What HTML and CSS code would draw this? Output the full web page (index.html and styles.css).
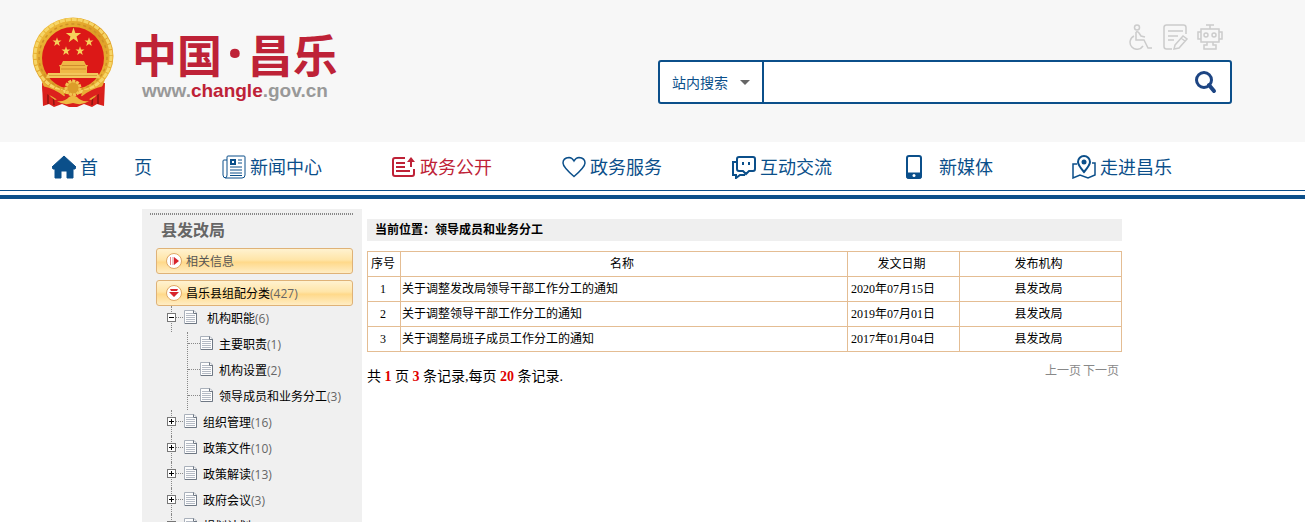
FILE: index.html
```html
<!DOCTYPE html>
<html lang="zh-CN">
<head>
  <meta charset="UTF-8">
  <title>中国·昌乐</title>
  <link rel="stylesheet" href="styles.css">
</head>
<body>
  <!-- shared symbols -->
  <svg class="defs" width="0" height="0">
    <symbol id="doc" viewBox="0 0 13 14">
      <path d="M.5.5h9.500l2.500 2.500v10.500H.5z" fill="#fdfdfd" stroke="#a9b0ba"/>
      <path d="M2 3.500h7M2 5.500h9M2 7.500h9M2 9.500h9M2 11.500h9" stroke="#b4bac4"/>
      <path d="M9.500.5v3h3M12.500 3v10.500H1" fill="none" stroke="#6f7884"/>
    </symbol>
    <symbol id="star" viewBox="-10 -10 20 20">
      <path d="M0-9.500 2.200-3H9L3.600 1.100 5.600 8 0 3.900-5.600 8-3.600 1.100-9-3h6.800z" fill="#f6d05a"/>
    </symbol>
  </svg>

  <header class="header">
    <div class="header-inner">
      <a class="logo" href="#">
        <svg class="emblem" viewBox="0 0 84 92">
          <defs>
            <linearGradient id="gold" x1="0" y1="0" x2="1" y2="1">
              <stop offset="0" stop-color="#f3c53f"/>
              <stop offset=".5" stop-color="#dd9b25"/>
              <stop offset="1" stop-color="#f0bd3c"/>
            </linearGradient>
          </defs>
          <path d="M10 66 11 89l6-2 5 3 8-3 7 3h8l7-3 8 3 5-3 7 2 1-23z" fill="#d9201c"/>
          <path d="M16 74v13M21 76l1 12M61 76l-1 12M66 74v13" stroke="#8f1512" stroke-width="1.500"/>
          <ellipse cx="41" cy="39" rx="40.500" ry="38.500" fill="url(#gold)"/>
          <ellipse cx="41" cy="39" rx="38" ry="36.500" fill="none" stroke="#f6d566" stroke-width="3" stroke-dasharray="5 1"/>
          <ellipse cx="41" cy="40" rx="34" ry="33" fill="none" stroke="#cf9026" stroke-width="1.500" stroke-dasharray="3 3"/>
          <circle cx="41" cy="41" r="31" fill="#dc1817"/>
          <use href="#star" x="33" y="10" width="17" height="17"/>
          <use href="#star" x="20" y="20" width="10" height="10"/>
          <use href="#star" x="52" y="20" width="10" height="10"/>
          <use href="#star" x="29" y="29" width="10" height="10"/>
          <use href="#star" x="43" y="29" width="10" height="10"/>
          <path d="M31 44h21l2 4h2l-1 2v6h-27v-6l-1-2h2z" fill="#efb847"/>
          <path d="M30 48.500h23M29 52h25" stroke="#cf8e2c"/>
          <path d="M16 56h50l2 5H14z" fill="#f3c75b"/>
          <path d="M17 58.500h48" stroke="#d99f3a"/>
          <path d="M8 60q8 13 23 13l2 6-10 4Q14 78 8 60zM74 60q-8 13-23 13l-2 6 10 4Q68 78 74 60z" fill="#e9ae35"/>
          <path d="M10 69q14 3 23 11l8-4 8 4q9-8 23-11l-1 7q-10 2-17 9l-13-5-13 5q-8-7-17-9z" fill="#dc211d"/>
          <circle cx="41" cy="71" r="7" fill="#dc9c2a"/>
          <circle cx="41" cy="71" r="7" fill="none" stroke="#f2c451" stroke-width="3" stroke-dasharray="3 1"/>
          <path d="M25 84q8 1 12-4l4-2 4 2q4 5 12 4-7 5-16 2-9 3-16-2z" fill="#efb842"/>
        </svg>
        <span class="logo-text">
          <span class="logo-name">中国<span class="dot">·</span>昌乐</span>
          <span class="logo-url">www.<b>changle</b>.gov.cn</span>
        </span>
      </a>

      <div class="header-right">
        <div class="tools">
          <a href="#" aria-label="无障碍">
            <svg width="26" height="26" viewBox="0 0 26 26">
              <circle cx="10" cy="3.500" r="2.500"/>
              <path d="M9 8q2-1 3 1l2 3 4 1M9 8v8h8l4 8h4M7 12a7 7 0 1 0 9 10"/>
            </svg>
          </a>
          <a href="#" aria-label="留言">
            <svg width="26" height="26" viewBox="0 0 26 26">
              <path d="M24 10V3.500Q24 1 21.500 1h-17Q2 1 2 3.500v19Q2 25 4.500 25H10M6 7h15M6 12h10M6 16h6M13 21l8-9 4 3-8 9-5 1zM19 14l4 3"/>
            </svg>
          </a>
          <a href="#" aria-label="智能问答">
            <svg width="26" height="26" viewBox="0 0 26 26">
              <path d="M9 1h8M13 1v4M4 5h18v13H4zM4 8H1v7h3M22 8h3v7h-3M10 18v3H7v4h12v-4h-3v-3"/>
              <circle cx="9" cy="11" r="2"/>
              <circle cx="17" cy="11" r="2"/>
            </svg>
          </a>
        </div>
        <form class="search" action="#">
          <label class="search-type">
            <select aria-label="搜索范围"><option>站内搜索</option></select>
          </label>
          <input type="text" aria-label="搜索">
          <button type="button" aria-label="搜索">
            <svg width="24" height="24" viewBox="0 0 24 24">
              <circle cx="10" cy="10" r="7.500" fill="none" stroke="#1d4583" stroke-width="3"/>
              <path d="m15 15 5 6" stroke="#1d4583" stroke-width="4" stroke-linecap="round"/>
            </svg>
          </button>
        </form>
      </div>
    </div>
  </header>

  <nav class="nav">
    <div class="nav-inner">
      <a href="#">
        <svg viewBox="0 0 24 24"><path d="M12 1 0 12l1 2h2v9h6v-7h6v7h6v-9h2l1-2z" fill="currentColor"/></svg>
        <span>首　　页</span>
      </a>
      <a href="#">
        <svg viewBox="0 0 24 24">
          <path d="M5 5H2Q1 5 1 6v14q0 3 3 3h16q3 0 3-3V2q0-1-1-1H6Q5 1 5 2v18q0 3-2 3M16 5h4M16 8h4M8 12h12M8 15h12M8 18h12M8 20.500h12"/>
          <path d="M9 5h4v4H9z" stroke-width="2"/>
        </svg>
        <span>新闻中心</span>
      </a>
      <a href="#" class="active">
        <svg viewBox="0 0 24 24">
          <path d="M13 3H3Q1 3 1 5v14q0 2 2 2h17q2 0 2-2v-5M4 8h9M4 12h9M4 16h14" stroke-width="2"/>
          <path d="M19 12V6" stroke-width="2"/><path d="m19 2 4 5h-8z" fill="currentColor" stroke="none"/>
        </svg>
        <span>政务公开</span>
      </a>
      <a href="#">
        <svg viewBox="0 0 24 24"><path d="M12 21.500Q1 12 1 8q0-5 6-5.500Q10 2.500 12 6q2-3.500 5-3.500 6 .5 6 5.500 0 4-11 13.500z" stroke-width="1.500"/></svg>
        <span>政务服务</span>
      </a>
      <a href="#">
        <svg viewBox="0 0 24 24">
          <path d="M7 2h14q2 0 2 2v10q0 2-2 2h-4l-3 3-3-3H7q-2 0-2-2V4q0-2 2-2zM4 7H1v13h3v3l4-3h5" stroke-width="2"/>
          <path d="M10 7h2v3h-2zM16 7h2v3h-2z" fill="currentColor" stroke="none"/>
        </svg>
        <span>互动交流</span>
      </a>
      <a href="#" class="short">
        <svg viewBox="0 0 24 24">
          <rect x="5" y="1" width="14" height="22" rx="2" stroke-width="2"/>
          <path d="M5 18h14v5H5z" fill="currentColor"/><circle cx="12" cy="20.500" r="1.500" fill="#fff" stroke="none"/>
        </svg>
        <span>新媒体</span>
      </a>
      <a href="#">
        <svg viewBox="0 0 24 24">
          <path d="M5 9H1v14l7-3 8 3 7-3V8h-3" stroke-width="1.500"/>
          <path d="M12 17Q6 10 6 7a6 6 0 0 1 12 0q0 3-6 10z" stroke-width="2"/><circle cx="12" cy="7" r="2.500" fill="currentColor" stroke="none"/>
        </svg>
        <span>走进昌乐</span>
      </a>
    </div>
  </nav>

  <div class="content">
    <aside class="sidebar">
      <h2>县发改局</h2>
      <a class="bar" href="#">
        <svg width="16" height="16" viewBox="0 0 16 16">
          <circle cx="8" cy="8" r="7.500" fill="#fff" stroke="#dfa866"/>
          <path d="M4.500 4v8M7 4v8" stroke="#e8868a"/>
          <path d="M8 4l5 4-5 4z" fill="#d8242c"/>
        </svg>相关信息
      </a>
      <a class="bar open" href="#">
        <svg width="16" height="16" viewBox="0 0 16 16">
          <circle cx="8" cy="8" r="7.500" fill="#fff" stroke="#dfa866"/>
          <path d="M4 4h8l-1 2H5zM3 7h10l-5 5z" fill="#d8242c"/>
        </svg>昌乐县组配分类<span>(427)</span>
      </a>

      <ul class="tree">
        <li class="first">
          <div class="row">
            <button type="button" class="toggle minus" aria-label="收起"></button>
            <svg class="doc"><use href="#doc"/></svg>
            <a href="#">机构职能<span>(6)</span></a>
          </div>
          <ul class="subtree">
            <li class="row"><svg class="doc"><use href="#doc"/></svg><a href="#">主要职责<span>(1)</span></a></li>
            <li class="row"><svg class="doc"><use href="#doc"/></svg><a href="#">机构设置<span>(2)</span></a></li>
            <li class="row"><svg class="doc"><use href="#doc"/></svg><a href="#">领导成员和业务分工<span>(3)</span></a></li>
          </ul>
        </li>
        <li>
          <div class="row">
            <button type="button" class="toggle" aria-label="展开"></button>
            <svg class="doc"><use href="#doc"/></svg>
            <a href="#">组织管理<span>(16)</span></a>
          </div>
        </li>
        <li>
          <div class="row">
            <button type="button" class="toggle" aria-label="展开"></button>
            <svg class="doc"><use href="#doc"/></svg>
            <a href="#">政策文件<span>(10)</span></a>
          </div>
        </li>
        <li>
          <div class="row">
            <button type="button" class="toggle" aria-label="展开"></button>
            <svg class="doc"><use href="#doc"/></svg>
            <a href="#">政策解读<span>(13)</span></a>
          </div>
        </li>
        <li>
          <div class="row">
            <button type="button" class="toggle" aria-label="展开"></button>
            <svg class="doc"><use href="#doc"/></svg>
            <a href="#">政府会议<span>(3)</span></a>
          </div>
        </li>
        <li>
          <div class="row">
            <button type="button" class="toggle" aria-label="展开"></button>
            <svg class="doc"><use href="#doc"/></svg>
            <a href="#">规划计划</a>
          </div>
        </li>
      </ul>
    </aside>

    <main class="main">
      <div class="position">当前位置：领导成员和业务分工</div>
      <table class="list">
        <thead>
          <tr>
            <th class="col-no">序号</th>
            <th>名称</th>
            <th class="col-date">发文日期</th>
            <th class="col-org">发布机构</th>
          </tr>
        </thead>
        <tbody>
          <tr>
            <td>1</td>
            <td class="left"><a href="#">关于调整发改局领导干部工作分工的通知</a></td>
            <td class="date">2020年07月15日</td>
            <td>县发改局</td>
          </tr>
          <tr>
            <td>2</td>
            <td class="left"><a href="#">关于调整领导干部工作分工的通知</a></td>
            <td class="date">2019年07月01日</td>
            <td>县发改局</td>
          </tr>
          <tr>
            <td>3</td>
            <td class="left"><a href="#">关于调整局班子成员工作分工的通知</a></td>
            <td class="date">2017年01月04日</td>
            <td>县发改局</td>
          </tr>
        </tbody>
      </table>
      <div class="pager">
        <p>共 <b>1</b> 页 <b>3</b> 条记录,每页 <b>20</b> 条记录.</p>
        <div class="pager-links"><a href="#">上一页</a><a href="#">下一页</a></div>
      </div>
    </main>
  </div>
</body>
</html>
```
FILE: styles.css
```css
* {
  box-sizing: border-box;
}

body {
  margin: 0;
  height: 100vh;
  overflow: hidden;
  display: flex;
  flex-direction: column;
  font-family: "Open Sans", "Noto Sans CJK SC", sans-serif;
  font-size: 12px;
  color: #000;
  background: #fff;
}

a {
  color: inherit;
  text-decoration: none;
}

ul,
p,
h2 {
  margin: 0;
  padding: 0;
  list-style: none;
}

.defs {
  position: absolute;
}

/* header */
.header {
  flex: none;
  background: #f7f7f7;
}

.header-inner {
  max-width: 1241px;
  height: 142px;
  margin: 0 auto;
  padding-right: 41px;
  display: flex;
  justify-content: space-between;
}

.logo {
  display: flex;
  padding-top: 17px;
  gap: 16px;
}

.emblem {
  width: 84px;
  height: 92px;
}

.logo-text {
  display: flex;
  flex-direction: column;
  padding-top: 12px;
}

.logo-name {
  height: 52px;
  font-family: "Noto Sans CJK SC", sans-serif;
  font-size: 45px;
  line-height: 50px;
  font-weight: bold;
  color: #be2237;
}

.logo-name .dot {
  padding: 0 5px;
  font-family: "Noto Sans", sans-serif;
  font-size: 56px;
  line-height: 40px;
}

.logo-url {
  padding-left: 10px;
  font-family: "Liberation Sans", sans-serif;
  font-size: 19px;
  line-height: 20px;
  font-weight: bold;
  color: #999;
}

.logo-url b {
  color: #be2237;
}

.header-right {
  width: 574px;
  padding-top: 24px;
}

.tools {
  display: flex;
  justify-content: flex-end;
  gap: 9px;
  padding-right: 9px;
  height: 36px;
}

.tools svg {
  fill: none;
  stroke: #ccc;
  stroke-width: 1.5;
}

.search {
  display: flex;
  height: 44px;
  border: 2px solid #0b4f8a;
  border-radius: 3px;
  background: #fff;
}

.search-type {
  position: relative;
  width: 104px;
  border-right: 2px solid #0b4f8a;
}

.search-type::after {
  content: "";
  position: absolute;
  right: 12px;
  top: 18px;
  border: 5px solid transparent;
  border-top-color: #666;
  pointer-events: none;
}

.search select {
  width: 100%;
  height: 100%;
  padding: 0 12px;
  border: none;
  background: none;
  appearance: none;
  font-family: inherit;
  font-size: 14px;
  color: #0b4f8a;
}

.search input {
  flex: 1;
  border: none;
  background: none;
  font-size: 14px;
}

.search button {
  display: flex;
  align-items: center;
  padding: 0 12px;
  border: none;
  background: none;
  cursor: pointer;
}

/* navigation */
.nav {
  flex: none;
  height: 57px;
  border-bottom: 4px solid #0b4f8a;
}

.nav::after {
  content: "";
  display: block;
  border-top: 1px solid #0b4f8a;
}

.nav-inner {
  max-width: 1201px;
  height: 48px;
  margin: 0 auto;
  display: flex;
}

.nav a {
  display: flex;
  align-items: center;
  gap: 4px;
  width: 170px;
  padding-top: 2px;
  font-size: 18px;
  color: #0b4f8a;
  white-space: nowrap;
}

.nav a.active {
  color: #be2237;
}

.nav span {
  margin-bottom: 2px;
}

.nav .short span {
  padding-left: 9px;
}

.nav svg {
  width: 24px;
  height: 24px;
  fill: none;
  stroke: currentColor;
}

/* content */
.content {
  flex: 1;
  min-height: 0;
  width: 100%;
  max-width: 1021px;
  margin: 0 auto;
  padding: 10px 41px 0 0;
  display: flex;
  gap: 5px;
}

.sidebar {
  flex: none;
  width: 220px;
  padding: 4px 9px 0 14px;
  background: #f0f0f0;
}

.sidebar::before {
  content: "";
  display: block;
  height: 2px;
  margin: 0 -1px 0 -6px;
  background: repeating-linear-gradient(90deg, #888 0, #888 1px, #f0f0f0 1px, #f0f0f0 2px);
}

.sidebar h2 {
  height: 33px;
  padding-left: 5px;
  font-size: 16px;
  line-height: 31px;
  color: #666;
}

.bar {
  display: flex;
  align-items: center;
  height: 26px;
  margin-bottom: 6px;
  padding-left: 9px;
  border: 1px solid #dfb277;
  border-radius: 3px;
  background: linear-gradient(#fff2d0, #ffe5a8 45%, #ffd98a 55%, #ffedc4);
  color: #555;
}

.bar svg {
  margin-right: 4px;
}

.bar.open {
  margin-bottom: 0;
  color: #000;
}

.bar span,
.tree span {
  color: #666;
}

.tree > li {
  position: relative;
}

/* dotted trunk of the tree */
.tree > li::before {
  content: "";
  position: absolute;
  left: 15px;
  top: 0;
  height: 26px;
  border-left: 1px dotted #888;
}

.row {
  display: flex;
  align-items: center;
  height: 26px;
  padding-left: 11px;
  white-space: nowrap;
}

.row a {
  margin-bottom: 2px;
}

.toggle {
  position: relative;
  width: 9px;
  height: 9px;
  margin-bottom: 4px;
  padding: 0;
  border: 1px solid #777;
  background:
    linear-gradient(#000, #000) center / 5px 1px no-repeat,
    linear-gradient(#000, #000) center / 1px 5px no-repeat,
    #fff;
}

.toggle.minus {
  background: linear-gradient(#000, #000) center / 5px 1px no-repeat, #fff;
}

.toggle + .doc {
  margin-left: 8px;
}

.doc {
  flex: none;
  width: 13px;
  height: 14px;
  margin: 0 6px 4px 0;
}

.toggle::after,
.subtree .row::before {
  content: "";
  border-top: 1px dotted #888;
}

.toggle::after {
  position: absolute;
  left: 8px;
  top: 3px;
  width: 7px;
}

.first > .row a {
  padding-left: 4px;
}

.subtree {
  margin-left: 31px;
  border-left: 1px dotted #888;
}

.subtree .row {
  padding-left: 0;
}

.subtree .row::before {
  width: 12px;
  margin-bottom: 4px;
}

/* list */
.main {
  flex: 1;
  padding-top: 10px;
  font-family: "Liberation Serif", "Noto Sans CJK SC", serif;
}

.position {
  height: 22px;
  margin-bottom: 10px;
  padding-left: 8px;
  line-height: 22px;
  font-weight: bold;
  background: #efefef;
}

.list {
  width: 100%;
  table-layout: fixed;
  border: 1px solid #e4bd93;
  border-collapse: collapse;
}

.list th,
.list td {
  height: 25px;
  padding: 0 4px 0 0;
  border: 1px solid #e4bd93;
  font-weight: normal;
  line-height: 20px;
  text-align: center;
}

.list th:first-child,
.list td:first-child {
  padding: 0 2px 0 0;
}

.list .left {
  padding-left: 1px;
  text-align: left;
}

.list .date {
  padding-left: 3px;
  text-align: left;
}

.col-no {
  width: 33px;
}

.col-date {
  width: 112px;
}

.col-org {
  width: 162px;
}

.pager {
  display: flex;
  justify-content: space-between;
  padding: 9px 3px 0 0;
}

.pager p {
  padding-top: 6px;
  font-size: 14px;
  line-height: 20px;
}

.pager b {
  color: #e00000;
}

.pager-links {
  display: flex;
  gap: 2px;
  line-height: 20px;
  color: #888;
}
```
